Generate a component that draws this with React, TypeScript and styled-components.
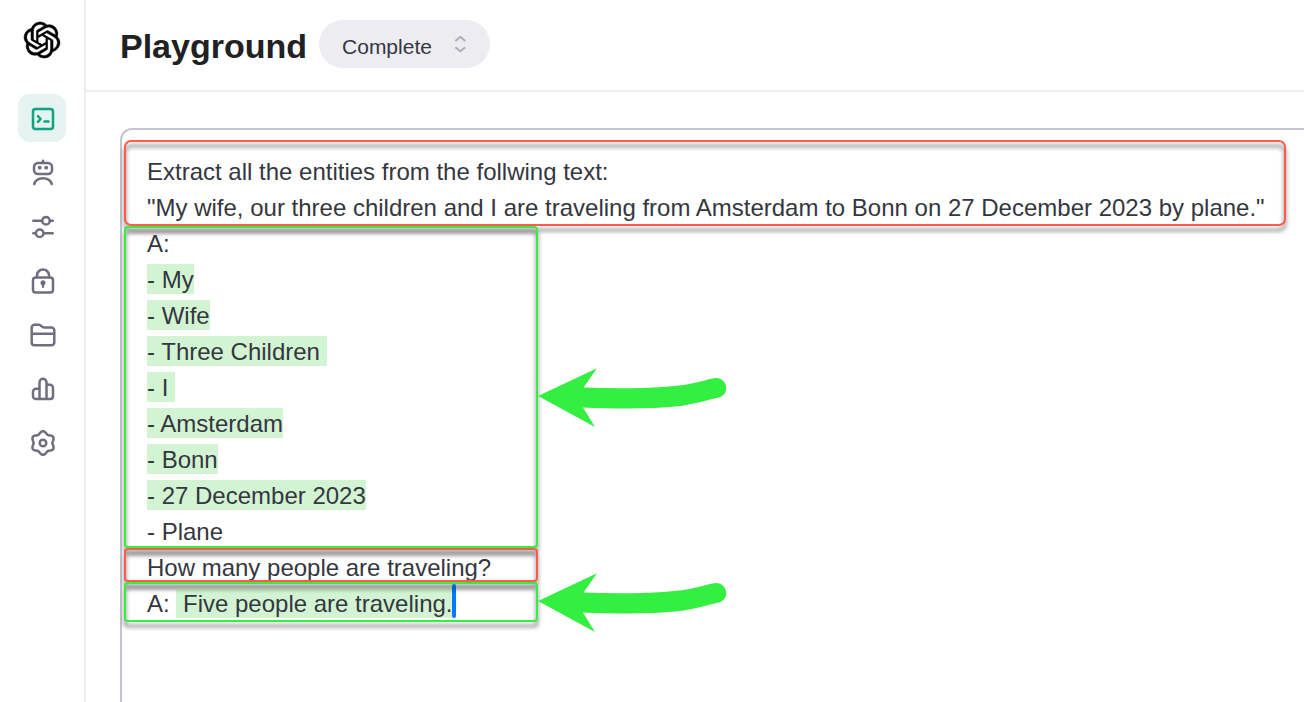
import React from "react";
import styled, { createGlobalStyle } from "styled-components";
import { SiOpenai } from "react-icons/si";

const GlobalStyle = createGlobalStyle`
  * { box-sizing: border-box; }
  body {
    margin: 0;
    background: #fff;
    color: #353740;
    font-family: "Liberation Sans", Arial, sans-serif;
  }
`;

const Page = styled.div`
  display: flex;
  min-height: 100vh;
`;

const Sidebar = styled.nav`
  flex: none;
  width: 86px;
  padding-top: 22px;
  border-right: 2px solid #ececf1;
  display: flex;
  flex-direction: column;
  align-items: center;
`;

const Logo = styled.a`
  display: flex;
  color: #000;
  margin-bottom: 36px;

  svg {
    overflow: visible;
    stroke-width: 0.4;
  }
`;

const NavList = styled.div`
  display: flex;
  flex-direction: column;
  gap: 6px;
`;

const NavButton = styled.button<{ $active?: boolean }>`
  width: 48px;
  height: 48px;
  padding: 0;
  border: 0;
  border-radius: 12px;
  display: flex;
  align-items: center;
  justify-content: center;
  background: ${(p) => (p.$active ? "#e5f3f1" : "transparent")};
  color: ${(p) => (p.$active ? "#10a37f" : "#6e6e80")};
  cursor: pointer;
`;

const Main = styled.main`
  flex: 1;
  min-width: 0;
  display: flex;
  flex-direction: column;
`;

const Header = styled.header`
  display: flex;
  align-items: center;
  gap: 12px;
  padding: 20px 34px 22px;
  border-bottom: 2px solid #ececf1;
`;

const Title = styled.h1`
  margin: 0;
  padding-top: 4px;
  color: #202123;
  font-size: 34px;
  line-height: 44px;
  font-weight: 700;
`;

const ModePicker = styled.label`
  position: relative;
  display: flex;
`;

const ModeSelect = styled.select`
  appearance: none;
  height: 48px;
  width: 171px;
  padding: 4px 48px 0 23px;
  border: 0;
  border-radius: 24px;
  background: #ececf1;
  color: #353740;
  font-family: inherit;
  font-size: 21px;
`;

const PickerArrows = styled.svg`
  position: absolute;
  right: 22px;
  top: 14px;
  pointer-events: none;
`;

const Editor = styled.div`
  flex: 1;
  margin: 36px 0 0 34px;
  padding: 24px 16px 78px 25px;
  border: 2px solid #c5c5d2;
  border-right: 0;
  border-bottom: 0;
  border-top-left-radius: 12px;
  font-size: 24px;
  line-height: 36px;
  outline: none;
`;

const Block = styled.div`
  position: relative;
`;

const Line = styled.div`
  min-height: 36px;
`;

const Generated = styled.mark`
  color: inherit;
  background: #d2f4d3;
  padding: 2px 0 1px;
  white-space: pre;
`;

const Caret = styled.span`
  position: absolute;
  top: -2px;
  width: 4px;
  height: 34px;
  margin-left: -1px;
  border-radius: 2px;
  background: #007aff;
`;

const Frame = styled.span<{ $tone: string; $top: number; $bottom: number; $wide?: boolean }>`
  position: absolute;
  left: -23px;
  top: ${(p) => p.$top}px;
  bottom: ${(p) => p.$bottom}px;
  ${(p) => (p.$wide ? "right: 2px;" : "width: 414px;")}
  border: 2px solid ${(p) => p.$tone};
  border-radius: ${(p) => (p.$wide ? 7 : 4)}px;
  filter: drop-shadow(0 5px 2px rgba(0, 0, 0, 0.6));
  pointer-events: none;
`;

const ArrowSvg = styled.svg<{ $top: number }>`
  position: absolute;
  left: 391px;
  top: ${(p) => p.$top}px;
  pointer-events: none;
`;

const RED = "#ff5a4a";
const GREEN = "#35ee42";

const Arrow = ({ top }: { top: number }) => (
  <ArrowSvg $top={top} width="192" height="60" viewBox="0 0 192 60" aria-hidden="true">
    <path
      fill={GREEN}
      d="M0 28 59 0.300 45.500 19.500C85 20.800 125 20.500 150 16.200C162 14 171 11 177 10A10 10 0 0 1 182 29.200C169 32 157 36 140 38.300C110 41.500 75 40.600 45 39.500L57 59Z"
    />
  </ArrowSvg>
);

const gearPath = (() => {
  const points: string[] = [];
  for (let i = 0; i < 120; i++) {
    const t = (i / 120) * Math.PI * 2;
    const r = 10.6 + 1.2 * Math.cos(6 * t);
    points.push(`${(15 + r * Math.sin(t)).toFixed(2)} ${(15 - r * Math.cos(t)).toFixed(2)}`);
  }
  return `M${points.join("L")}Z`;
})();

const Icon = ({ children }: { children: React.ReactNode }) => (
  <svg
    width="28"
    height="28"
    viewBox="0 0 28 28"
    fill="none"
    stroke="currentColor"
    strokeWidth="2.5"
    strokeLinecap="round"
    strokeLinejoin="round"
    aria-hidden="true"
  >
    {children}
  </svg>
);

const navItems: { label: string; art: React.ReactNode }[] = [
  {
    label: "Playground",
    art: (
      <>
        <rect x="5" y="5" width="20" height="20" rx="2.500" />
        <path d="M10 12.200 12.600 15 10 17.800M16.500 17.500h4" />
      </>
    ),
  },
  {
    label: "Assistants",
    art: (
      <>
        <path d="M15 2.800v1.500" />
        <rect x="6" y="4.900" width="18" height="11.200" rx="4" />
        <path d="M6.200 26c1.200-3.700 4.600-5.800 8.800-5.800s7.600 2.100 8.800 5.800" />
        <circle cx="11.700" cy="9.700" r="1.900" fill="currentColor" stroke="none" />
        <circle cx="18.200" cy="9.700" r="1.900" fill="currentColor" stroke="none" />
      </>
    ),
  },
  {
    label: "Fine-tuning",
    art: (
      <>
        <path d="M5.300 8.700h8.700M22 8.700h2.700M5.300 21.300h2.400M15.700 21.300h9" />
        <circle cx="18" cy="8.700" r="3.800" />
        <circle cx="11.700" cy="21.300" r="3.800" />
      </>
    ),
  },
  {
    label: "API keys",
    art: (
      <>
        <rect x="5" y="11.500" width="20" height="15" rx="2.800" />
        <path d="M9 11.300V9.500a6 6 0 0 1 12 0v1.800" />
        <path d="M15 17v4" strokeWidth="2.200" />
        <circle cx="15" cy="16.800" r="2.500" fill="currentColor" stroke="none" />
      </>
    ),
  },
  {
    label: "Files",
    art: (
      <path d="M3.700 13.700H26.300M6.500 4.800h4.700c1.900 0 2.600 2.700 5 2.700h7.300a2.800 2.800 0 0 1 2.800 2.800v12.200a2.800 2.800 0 0 1-2.800 2.800h-17a2.800 2.800 0 0 1-2.800-2.800V7.600a2.800 2.800 0 0 1 2.800-2.800z" />
    ),
  },
  {
    label: "Usage",
    art: (
      <path d="M11.500 25V8.300a3.500 3.500 0 0 1 7 0V25M11.500 14.700H8a3 3 0 0 0-3 3v4.600A2.700 2.700 0 0 0 7.700 25h14.600a2.700 2.700 0 0 0 2.700-2.700v-8.600a3 3 0 0 0-3-3h-3.500" />
    ),
  },
  {
    label: "Settings",
    art: (
      <>
        <path d={gearPath} />
        <circle cx="15" cy="15" r="3.300" />
      </>
    ),
  },
];

const entities = ["- My", "- Wife", "- Three Children ", "- I ", "- Amsterdam", "- Bonn", "- 27 December 2023"];

export default function App() {
  return (
    <>
      <GlobalStyle />
      <Page>
        <Sidebar aria-label="Main">
          <Logo href="#" aria-label="OpenAI">
            <SiOpenai size={36} />
          </Logo>
          <NavList>
            {navItems.map((item, i) => (
              <NavButton key={item.label} type="button" $active={i === 0} aria-label={item.label}>
                <Icon>{item.art}</Icon>
              </NavButton>
            ))}
          </NavList>
        </Sidebar>
        <Main>
          <Header>
            <Title>Playground</Title>
            <ModePicker>
              <ModeSelect aria-label="Mode" defaultValue="Complete">
                <option>Complete</option>
              </ModeSelect>
              <PickerArrows
                width="16"
                height="20"
                viewBox="0 0 16 20"
                fill="none"
                stroke="#acacbe"
                strokeWidth="2"
                strokeLinecap="round"
                strokeLinejoin="round"
                aria-hidden="true"
              >
                <path d="M4 6.500 8.300 2.800l4.300 3.700M4 13.800 8.300 17.300l4.300-3.500" />
              </PickerArrows>
            </ModePicker>
          </Header>
          <Editor
            role="textbox"
            aria-multiline="true"
            aria-label="Prompt"
            contentEditable
            suppressContentEditableWarning
            spellCheck={false}
          >
            <Block>
              <Line>Extract all the entities from the follwing text:</Line>
              <Line>"My wife, our three children and I are traveling from Amsterdam to Bonn on 27 December 2023 by plane."</Line>
              <Frame $tone={RED} $top={-14} $bottom={0} $wide />
            </Block>
            <Block>
              <Line>A:</Line>
              {entities.map((text) => (
                <Line key={text}>
                  <Generated>{text}</Generated>
                </Line>
              ))}
              <Line>- Plane</Line>
              <Frame $tone={GREEN} $top={0} $bottom={2} />
              <Arrow top={142} />
            </Block>
            <Block>
              <Line>How many people are traveling?</Line>
              <Frame $tone={RED} $top={-2} $bottom={4} />
            </Block>
            <Block>
              <Line>
                A: <Generated> Five people are traveling.</Generated>
                <Caret />
              </Line>
              <Frame $tone={GREEN} $top={-4} $bottom={0} />
              <Arrow top={-13} />
            </Block>
          </Editor>
        </Main>
      </Page>
    </>
  );
}
